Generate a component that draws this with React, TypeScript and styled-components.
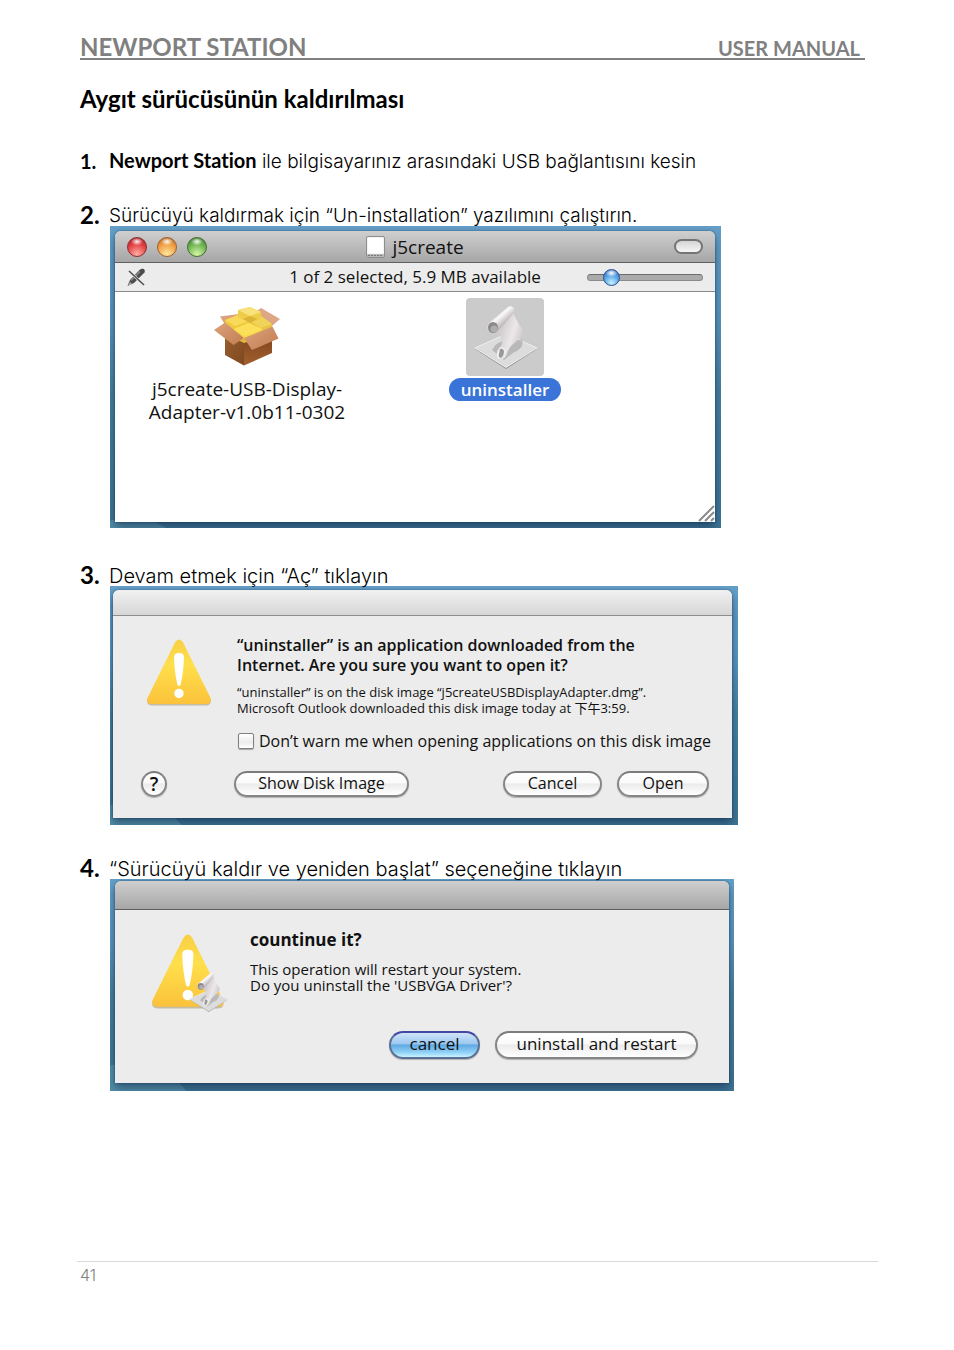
import React, { useState } from 'react';
import styled, { createGlobalStyle, css } from 'styled-components';

const titleFont = `"Century Gothic", Lato, "Liberation Sans", sans-serif`;
const bodyFont = `"Century Gothic", Inter, "Liberation Sans", sans-serif`;
const macFont = `"Lucida Grande", "Open Sans", "Noto Sans CJK TC", sans-serif`;

const GlobalStyle = createGlobalStyle`
  * { box-sizing: border-box; }
  body { margin: 0; background: #fff; color: #000; font-family: ${bodyFont}; }
  h1, h2, p, ol, figure { margin: 0; padding: 0; }
`;

/* ---------- manual page ---------- */

const Page = styled.div`
  display: flex;
  flex-direction: column;
  min-height: 100vh;
  padding: 36px 76px 62px 77px;
`;

const PageHeader = styled.header`
  display: flex;
  justify-content: space-between;
  align-items: baseline;
  margin: 0 13px 0 3px;
  padding-right: 5px;
  border-bottom: 2px solid #808080;
  color: #808080;
  font-family: ${titleFont};
  font-weight: 700;
`;

const Product = styled.span`
  font-size: 24px;
  line-height: 22px;
`;

const DocType = styled.span`
  font-size: 20px;
  line-height: 16px;
`;

const Content = styled.main`
  flex: 1;
  padding: 25px 3px 32px;
`;

const Title = styled.h1`
  font: 700 24px/28px ${titleFont};
  font-variant-ligatures: none;
`;

const Steps = styled.ol`
  display: flex;
  flex-direction: column;
  gap: 34px;
  margin-top: 39px;
  list-style: none;
`;

const Step = styled.li<{ $wide?: boolean }>`
  display: grid;
  grid-template-columns: 29px minmax(0, 1fr);
  font-size: ${(p) => (p.$wide ? 20 : 19)}px;
  font-weight: 300;
  line-height: 20px;
`;

const StepNumber = styled.span<{ $large?: boolean }>`
  font-family: ${titleFont};
  font-size: ${(p) => (p.$large ? 24 : 20)}px;
  font-weight: 700;
  line-height: 18px;
`;

const Strong = styled.strong`
  font-family: ${titleFont};
  font-size: 20px;
  font-weight: 700;
  font-variant-ligatures: none;
  line-height: 0;
`;

const PageFooter = styled.footer`
  border-top: 1px solid #d9d9d9;
  padding: 3px;
  color: #808080;
  font-size: 16px;
  font-weight: 300;
  line-height: 20px;
`;

/* ---------- desktop captures ---------- */

const Desktop = styled.figure<{ $width: number; $pad: string }>`
  max-width: ${(p) => p.$width}px;
  padding: ${(p) => p.$pad};
  margin-left: 1px;
  overflow: hidden;
  background:
    radial-gradient(circle at 20px 120%, rgba(120, 190, 205, 0.35) 0 70px, transparent 71px),
    linear-gradient(#649fc7 0, #5b97bf 30%, #47809f 55%, #3f7596 100%);
`;

const FinderCapture = styled(Desktop)`
  margin-bottom: 4px;
`;

const Window = styled.div`
  position: relative;
  border-radius: 6px 6px 0 0;
  background: #ececec;
  box-shadow: 0 0 2px rgba(10, 40, 70, 0.6), 0 5px 10px rgba(10, 30, 60, 0.5);
  color: #111;
  font-family: ${macFont};
  font-weight: 400;
`;

const TitleBar = styled.div<{ $height: number; $light?: boolean }>`
  display: grid;
  grid-template-columns: 1fr auto 1fr;
  align-items: center;
  height: ${(p) => p.$height}px;
  padding: 0 12px;
  border-radius: 6px 6px 0 0;
  border-bottom: 1px solid ${(p) => (p.$light ? '#8e8e8e' : '#606060')};
  background: ${(p) =>
    p.$light ? 'linear-gradient(#f1f1f1, #d6d6d6)' : 'linear-gradient(#cfcfcf, #a6a6a6)'};
`;

const Lights = styled.div`
  display: flex;
  gap: 10px;
`;

const Light = styled.button<{ $rim: string; $core: string; $glow: string }>`
  width: 20px;
  height: 20px;
  padding: 0;
  border: 1px solid ${(p) => p.$rim};
  border-radius: 50%;
  background:
    radial-gradient(ellipse 6px 4px at 50% 20%, rgba(255, 255, 255, 0.95), transparent),
    radial-gradient(circle at 50% 90%, ${(p) => p.$glow} 0, ${(p) => p.$core} 60%, ${(p) => p.$rim} 100%);
`;

const WindowTitle = styled.h2`
  display: flex;
  align-items: center;
  gap: 7px;
  font-size: 19px;
  font-weight: 400;
  line-height: 24px;
`;

const ToolbarPill = styled.button`
  justify-self: end;
  width: 29px;
  height: 15px;
  padding: 0;
  border: 2px solid #747474;
  border-radius: 8px;
  background: linear-gradient(#d4d4d4, #f6f6f6);
`;

const StatusBar = styled.div`
  display: grid;
  grid-template-columns: 1fr auto 1fr;
  align-items: center;
  height: 29px;
  padding: 0 12px;
  border-bottom: 1px solid #8c8c8c;
  font-size: 17px;
`;

const ZoomSlider = styled.input`
  justify-self: end;
  width: 116px;
  height: 18px;
  margin: 0;
  appearance: none;
  background: transparent;

  &::-webkit-slider-runnable-track {
    height: 7px;
    border: 1px solid #8a8a8a;
    border-top-color: #6b6b6b;
    border-radius: 4px;
    background: #aaa;
  }

  &::-webkit-slider-thumb {
    appearance: none;
    width: 17px;
    height: 17px;
    margin-top: -6px;
    border: 1px solid #2c4f94;
    border-radius: 50%;
    background:
      radial-gradient(ellipse 6px 4px at 50% 20%, #fff, transparent),
      radial-gradient(circle at 50% 85%, #c6f2ff 0, #5aa5e6 50%, #2f62b4 100%);
  }
`;

const Files = styled.div`
  display: grid;
  grid-template-columns: 258px 258px;
  height: 230px;
  padding: 6px 3px;
  background: #fff;
`;

const File = styled.div`
  display: flex;
  flex-direction: column;
  align-items: center;
`;

const FileIcon = styled.div<{ $selected?: boolean }>`
  display: grid;
  place-items: center;
  width: 78px;
  height: 78px;
  border-radius: 4px;
  background: ${(p) => (p.$selected ? '#cbcbcb' : 'transparent')};
`;

const FileName = styled.span<{ $selected?: boolean }>`
  margin-top: 2px;
  font-size: 19px;
  line-height: 23px;
  text-align: center;

  ${(p) =>
    p.$selected &&
    css`
      padding: 0 12px;
      border-radius: 12px;
      background: #3a74d8;
      color: #fff;
      font-size: 17px;
      font-weight: 600;
    `}
`;

const Grip = styled.svg`
  position: absolute;
  right: 0;
  bottom: 0;
`;

const Pane = styled.div<{ $columns: string; $pad: string }>`
  display: grid;
  grid-template-columns: ${(p) => p.$columns};
  padding: ${(p) => p.$pad};
`;

const AlertIcon = styled.div<{ $left: number }>`
  padding: 4px 0 0 ${(p) => p.$left}px;
`;

const Message = styled.div`
  padding-left: 3px;
`;

const Headline = styled.p<{ $large?: boolean }>`
  font-size: ${(p) => (p.$large ? 17 : 16)}px;
  font-weight: ${(p) => (p.$large ? 700 : 600)};
  line-height: 20px;
`;

const Detail = styled.p<{ $large?: boolean }>`
  margin-top: ${(p) => (p.$large ? 11 : 9)}px;
  font-size: ${(p) => (p.$large ? 15 : 13)}px;
  line-height: 16px;
`;

const CheckLabel = styled.label`
  display: flex;
  align-items: center;
  gap: 5px;
  height: 18px;
  margin-top: 16px;
  font-size: 16px;
  white-space: nowrap;
`;

const Check = styled.input`
  flex: none;
  appearance: none;
  width: 16px;
  height: 16px;
  margin: 0 0 0 1px;
  border: 1px solid #808080;
  border-radius: 2px;
  background: linear-gradient(#fff, #ececec 60%, #fff);
  box-shadow: 0 1px 1px rgba(0, 0, 0, 0.3);

  &:checked {
    background: #5aa5e6;
  }
`;

const HelpCell = styled.div`
  padding: 21px 0 0 28px;
`;

const Actions = styled.div<{ $top: number }>`
  display: flex;
  justify-content: flex-end;
  gap: 15px;
  padding-top: ${(p) => p.$top}px;
`;

const PushButton = styled.button<{ $width: number; $large?: boolean; $primary?: boolean; $lead?: boolean }>`
  width: ${(p) => p.$width}px;
  height: ${(p) => (p.$large ? 28 : 26)}px;
  padding: 0 0 2px;
  margin-right: ${(p) => (p.$lead ? 'auto' : 0)};
  border: 2px solid ${(p) => (p.$primary ? '#5b6f93' : '#868686')};
  border-top-color: ${(p) => (p.$primary ? '#4448a0' : '#7c7c7c')};
  border-radius: 14px;
  background: ${(p) =>
    p.$primary
      ? 'linear-gradient(#cfe4f8 0, #9cc8f0 45%, #5fa8e2 50%, #8fd0f6 80%, #c8f4ff 100%)'
      : 'linear-gradient(#fff 0, #fafafa 45%, #ebebeb 50%, #fff 100%)'};
  box-shadow: 0 1px 1px rgba(0, 0, 0, 0.25);
  color: #111;
  font: 400 ${(p) => (p.$large ? 17 : 16)}px/20px ${macFont};
  white-space: nowrap;
`;

const HelpButton = styled(PushButton)`
  padding: 0;
  border-radius: 50%;
  font-size: 19px;
  font-weight: 600;
`;

/* ---------- drawings ---------- */

const DiskIcon = () => (
  <svg width="19" height="22" viewBox="0 0 19 22" aria-hidden="true">
    <rect x="0.5" y="0.5" width="18" height="21" rx="1.5" fill="#f4f4f4" stroke="#8d8d8d" />
    <rect x="2" y="2" width="15" height="15" fill="#fff" />
    <path d="M1 18h17v3H1z" fill="#b9b9b9" />
    <path d="M2 19.5h14" stroke="#777" strokeDasharray="2 1" />
  </svg>
);

const PencilOffIcon = () => (
  <svg width="19" height="19" viewBox="0 0 19 19" aria-hidden="true">
    <path d="M0.5 18 L3 12 L12.5 2 Q14.5 0 17 1 Q18.5 2.5 17.5 4.5 L7 15 Z" fill="#4c4c4c" />
    <path d="M4 12.500 L13 3.500" stroke="#8b8b8b" strokeWidth="1.200" />
    <path d="M1 18 L3 14 L5 16 Z" fill="#b5b5b5" />
    <path d="M2 3 L17 17" stroke="#ececec" strokeWidth="2.400" />
    <path d="M2 3 L17 17" stroke="#505050" strokeWidth="1.600" />
  </svg>
);

const PackageIcon = () => (
  <svg width="68" height="62" viewBox="-1 -1 68 62" aria-hidden="true">
    <defs>
      <linearGradient id="boxLeft" x1="0" y1="0" x2="1" y2="1">
        <stop offset="0" stopColor="#99602f" />
        <stop offset="1" stopColor="#7d481f" />
      </linearGradient>
      <linearGradient id="boxRight" x1="0" y1="0" x2="0" y2="1">
        <stop offset="0" stopColor="#7b431c" />
        <stop offset="1" stopColor="#a4602f" />
      </linearGradient>
      <linearGradient id="flap" x1="0" y1="0" x2="1" y2="1">
        <stop offset="0" stopColor="#dca27c" />
        <stop offset="1" stopColor="#c27d50" />
      </linearGradient>
    </defs>
    <path d="M6 9.500 L25 7 L34 12 L12 19Z" fill="#d9a17c" />
    <path d="M47 1 L66 12 L58 19 L37 8Z" fill="#dda684" />
    <path d="M11 16 L35 8 L58 18 L30 38Z" fill="#e2b93b" />
    <path d="M11 26 L30 36 V58.500 L11 48Z" fill="url(#boxLeft)" />
    <path d="M30 36 L58 27 V46 L30 58.500Z" fill="url(#boxRight)" />
    <path d="M11 13 L24 8 L35 14 V18 L20 25 L11 19Z" fill="#efca41" />
    <path d="M11 13 L24 8 L35 14 L21 19Z" fill="#f8d95a" />
    <path d="M36 14 L47 9 L58 17 V20 L47 25 L36 18Z" fill="#e9c440" />
    <path d="M36 14 L47 9 L58 17 L47 21Z" fill="#f2d35a" />
    <path d="M24 3 L36 0 L47 5 V12 L36 16 L24 10Z" fill="#efcd48" />
    <path d="M24 3 L36 0 L47 5 L36 9Z" fill="#f9e27c" />
    <path d="M29 12 L36 9 L43 12 L36 16Z" fill="#d2a92f" opacity="0.7" />
    <path d="M20 22 L35 16 L48 22 V26 L30 32 L20 27Z" fill="#f8d94a" />
    <path d="M20 22 L35 16 L48 22 L31 29Z" fill="#fde05a" />
    <path d="M0 23 L11 15.500 L30 31 L19.500 38Z" fill="url(#flap)" />
    <path d="M30 31 L58.500 19.500 L64.500 31.500 L38 43Z" fill="url(#flap)" />
  </svg>
);

const ScriptShape = () => (
  <>
    <defs>
      <linearGradient id="sheet" x1="0.100" y1="0.500" x2="0.800" y2="0.900">
        <stop offset="0" stopColor="#d3cecf" />
        <stop offset="0.5" stopColor="#ece7e8" />
        <stop offset="1" stopColor="#c9c4c5" />
      </linearGradient>
      <linearGradient id="roll" gradientUnits="userSpaceOnUse" x1="30" y1="15" x2="39" y2="25">
        <stop offset="0" stopColor="#e3dfe0" />
        <stop offset="0.4" stopColor="#faf7f8" />
        <stop offset="1" stopColor="#bdb8b9" />
      </linearGradient>
    </defs>
    <path d="M9 51 L40 37 L71 51 L40 71Z" fill="#8f8f8f" />
    <path d="M9 50 L40 36 L71 50 L40 69.500Z" fill="#dcdcdc" stroke="#efefef" />
    <path d="M26 52 Q30 44 40 42 L56 42 Q59 50 47 55 L38 62Z" fill="#777" opacity="0.35" />
    <path d="M31 32 L47 14 Q51 25 58 33 Q58 37 53 41 L46 47 Q42 51 40 58 Q37 63 33 60 Q29 55 33 50 Q38 46 35 40 Q34 36 31 32Z" fill="url(#sheet)" />
    <ellipse cx="35" cy="55" rx="4" ry="6" transform="rotate(20 35 55)" fill="#f0eeee" />
    <path d="M34 51 Q37 50 38 53 Q38 58 35 60 Q32 59 33 56Z" fill="#999" />
    <path d="M23 25 L42 9 Q45 7 48 10 Q49 13 47 16 L32 33 Q26 37 22 32 Q21 28 23 25Z" fill="url(#roll)" />
    <ellipse cx="27" cy="29.500" rx="5" ry="5.500" fill="#8b8889" />
    <ellipse cx="28" cy="31" rx="3.500" ry="3.500" fill="#b0adae" />
  </>
);

const ScriptIcon = () => (
  <svg width="78" height="78" viewBox="0 0 78 78" aria-hidden="true">
    <ScriptShape />
  </svg>
);

const WarningShape = () => (
  <>
    <defs>
      <linearGradient id="amber" x1="0" y1="0" x2="0" y2="1">
        <stop offset="0" stopColor="#f8cf45" />
        <stop offset="0.4" stopColor="#ffdf4b" />
        <stop offset="1" stopColor="#fbc23b" />
      </linearGradient>
    </defs>
    <path d="M28 4.500 Q32 -1.500 36 4.500 L63.500 60 Q65 66.500 59 66.500 H5 Q-1 66.500 0.500 60Z" fill="#9c8b62" opacity="0.5" />
    <path d="M28 3.500 Q32 -2.500 36 3.500 L63.500 59 Q65 65 59 65 H5 Q-1 65 0.500 59Z" fill="url(#amber)" />
    <path d="M27 18 Q27 14 32 14 Q37 14 37 18 Q36.500 34 33.500 46 Q32 48 30.500 46 Q27.500 34 27 18Z" fill="#fff" />
    <circle cx="32" cy="54.500" r="4.700" fill="#fff" />
  </>
);

const WarningIcon = () => (
  <svg width="65" height="68" viewBox="0 0 65 68" aria-hidden="true">
    <WarningShape />
  </svg>
);

const ScriptWarningIcon = () => (
  <svg width="78" height="80" viewBox="0 0 78 80" aria-hidden="true">
    <g transform="scale(1.12)">
      <WarningShape />
    </g>
    <g transform="translate(32 34) scale(0.62)">
      <ScriptShape />
    </g>
  </svg>
);

export default function App() {
  const [quiet, setQuiet] = useState(false);
  const [zoom, setZoom] = useState(15);

  return (
    <>
      <GlobalStyle />
      <Page lang="tr">
        <PageHeader>
          <Product>NEWPORT STATION</Product>
          <DocType>USER MANUAL</DocType>
        </PageHeader>

        <Content>
          <Title>Aygıt sürücüsünün kaldırılması</Title>
          <Steps>
            <Step>
              <StepNumber>1.</StepNumber>
              <p>
                <Strong>Newport Station</Strong> ile bilgisayarınız arasındaki USB bağlantısını kesin
              </p>
            </Step>

            <Step>
              <StepNumber $large>2.</StepNumber>
              <div>
                <p>Sürücüyü kaldırmak için “Un-installation” yazılımını çalıştırın.</p>
                <FinderCapture $width={611} $pad="5px 6px 6px 5px" lang="en">
                  <Window>
                    <TitleBar $height={32}>
                      <Lights>
                        <Light aria-label="Close" $rim="#8f2a2d" $core="#e0393d" $glow="#ffb0a4" />
                        <Light aria-label="Minimize" $rim="#a2602a" $core="#ee9a3e" $glow="#ffe9a0" />
                        <Light aria-label="Zoom" $rim="#3f702f" $core="#68b04c" $glow="#d5f7a5" />
                      </Lights>
                      <WindowTitle>
                        <DiskIcon />
                        j5create
                      </WindowTitle>
                      <ToolbarPill aria-label="Toggle toolbar" />
                    </TitleBar>
                    <StatusBar>
                      <PencilOffIcon />
                      <span>1 of 2 selected, 5.9 MB available</span>
                      <ZoomSlider
                        type="range"
                        aria-label="Icon size"
                        value={zoom}
                        onChange={(e) => setZoom(Number(e.target.value))}
                      />
                    </StatusBar>
                    <Files>
                      <File>
                        <FileIcon>
                          <PackageIcon />
                        </FileIcon>
                        <FileName>
                          j5create-USB-Display-
                          <br />
                          Adapter-v1.0b11-0302
                        </FileName>
                      </File>
                      <File>
                        <FileIcon $selected>
                          <ScriptIcon />
                        </FileIcon>
                        <FileName $selected>uninstaller</FileName>
                      </File>
                    </Files>
                    <Grip width="18" height="18" viewBox="0 0 18 18" aria-hidden="true">
                      <path d="M2 17 L17 2 M8 17 L17 8 M14 17 L17 14" stroke="#8a8a8a" strokeWidth="2" />
                    </Grip>
                  </Window>
                </FinderCapture>
              </div>
            </Step>

            <Step $wide>
              <StepNumber $large>3.</StepNumber>
              <div>
                <p>Devam etmek için “Aç” tıklayın</p>
                <Desktop $width={628} $pad="4px 6px 7px 3px" lang="en">
                  <Window>
                    <TitleBar $height={26} $light />
                    <Pane $columns="121px minmax(0, 1fr)" $pad="19px 23px 21px 0">
                      <AlertIcon $left={34}>
                        <WarningIcon />
                      </AlertIcon>
                      <Message>
                        <Headline>
                          “uninstaller” is an application downloaded from the
                          <br />
                          Internet. Are you sure you want to open it?
                        </Headline>
                        <Detail>
                          “uninstaller” is on the disk image “j5createUSBDisplayAdapter.dmg”.
                          <br />
                          Microsoft Outlook downloaded this disk image today at 下午3:59.
                        </Detail>
                        <CheckLabel>
                          <Check
                            type="checkbox"
                            checked={quiet}
                            onChange={(e) => setQuiet(e.target.checked)}
                          />
                          Don’t warn me when opening applications on this disk image
                        </CheckLabel>
                      </Message>
                      <HelpCell>
                        <HelpButton $width={26}>?</HelpButton>
                      </HelpCell>
                      <Actions $top={21}>
                        <PushButton $width={175} $lead>
                          Show Disk Image
                        </PushButton>
                        <PushButton $width={99}>Cancel</PushButton>
                        <PushButton $width={92}>Open</PushButton>
                      </Actions>
                    </Pane>
                  </Window>
                </Desktop>
              </div>
            </Step>

            <Step $wide>
              <StepNumber $large>4.</StepNumber>
              <div>
                <p>“Sürücüyü kaldır ve yeniden başlat” seçeneğine tıklayın</p>
                <Desktop $width={624} $pad="2px 5px 8px 5px" lang="en">
                  <Window>
                    <TitleBar $height={29} />
                    <Pane $columns="132px minmax(0, 1fr)" $pad="20px 31px 24px 0">
                      <AlertIcon $left={37}>
                        <ScriptWarningIcon />
                      </AlertIcon>
                      <div>
                        <Message>
                          <Headline $large>countinue it?</Headline>
                          <Detail $large>
                            This operation will restart your system.
                            <br />
                            Do you uninstall the 'USBVGA Driver'?
                          </Detail>
                        </Message>
                        <Actions $top={38}>
                          <PushButton $width={91} $large $primary>
                            cancel
                          </PushButton>
                          <PushButton $width={203} $large>
                            uninstall and restart
                          </PushButton>
                        </Actions>
                      </div>
                    </Pane>
                  </Window>
                </Desktop>
              </div>
            </Step>
          </Steps>
        </Content>

        <PageFooter>41</PageFooter>
      </Page>
    </>
  );
}
